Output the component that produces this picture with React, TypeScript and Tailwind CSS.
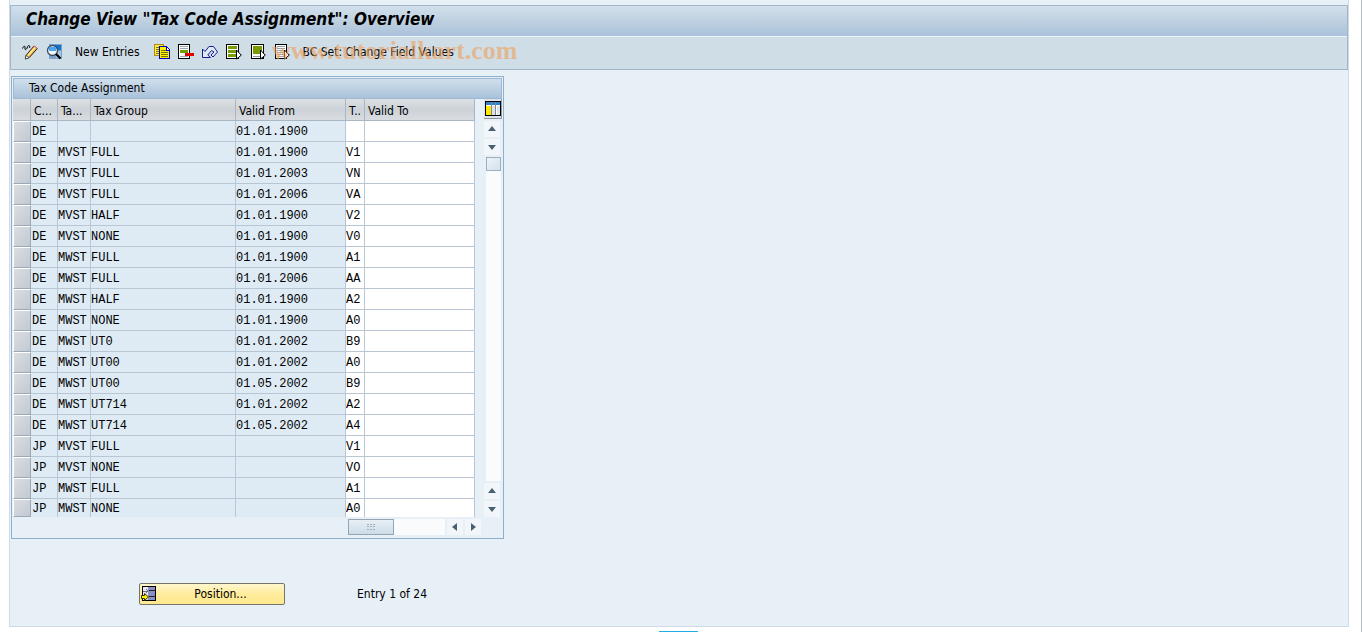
import type { ReactNode } from 'react';

type Entry = {
  country: string;
  category: string;
  group: string;
  from: string;
  code: string;
};

const entries: Entry[] = [
  { country: 'DE', category: '', group: '', from: '01.01.1900', code: '' },
  { country: 'DE', category: 'MVST', group: 'FULL', from: '01.01.1900', code: 'V1' },
  { country: 'DE', category: 'MVST', group: 'FULL', from: '01.01.2003', code: 'VN' },
  { country: 'DE', category: 'MVST', group: 'FULL', from: '01.01.2006', code: 'VA' },
  { country: 'DE', category: 'MVST', group: 'HALF', from: '01.01.1900', code: 'V2' },
  { country: 'DE', category: 'MVST', group: 'NONE', from: '01.01.1900', code: 'V0' },
  { country: 'DE', category: 'MWST', group: 'FULL', from: '01.01.1900', code: 'A1' },
  { country: 'DE', category: 'MWST', group: 'FULL', from: '01.01.2006', code: 'AA' },
  { country: 'DE', category: 'MWST', group: 'HALF', from: '01.01.1900', code: 'A2' },
  { country: 'DE', category: 'MWST', group: 'NONE', from: '01.01.1900', code: 'A0' },
  { country: 'DE', category: 'MWST', group: 'UT0', from: '01.01.2002', code: 'B9' },
  { country: 'DE', category: 'MWST', group: 'UT00', from: '01.01.2002', code: 'A0' },
  { country: 'DE', category: 'MWST', group: 'UT00', from: '01.05.2002', code: 'B9' },
  { country: 'DE', category: 'MWST', group: 'UT714', from: '01.01.2002', code: 'A2' },
  { country: 'DE', category: 'MWST', group: 'UT714', from: '01.05.2002', code: 'A4' },
  { country: 'JP', category: 'MVST', group: 'FULL', from: '', code: 'V1' },
  { country: 'JP', category: 'MVST', group: 'NONE', from: '', code: 'VO' },
  { country: 'JP', category: 'MWST', group: 'FULL', from: '', code: 'A1' },
  { country: 'JP', category: 'MWST', group: 'NONE', from: '', code: 'A0' },
];

function Icon({ children }: { children: ReactNode }) {
  return (
    <svg viewBox="0 0 16 16" className="block size-4" shapeRendering="crispEdges" aria-hidden="true">
      {children}
    </svg>
  );
}

function ToolButton({ label, children }: { label: string; children: ReactNode }) {
  return (
    <button type="button" aria-label={label} className="block size-4 shrink-0">
      <Icon>{children}</Icon>
    </button>
  );
}

function Cursor() {
  return <path d="M10.500 6v9l4.800-3.800z" fill="#fff" stroke="#000" shapeRendering="auto" />;
}

const arrowPaths = {
  up: 'M4 10l4-5 4 5z',
  down: 'M4 6l4 5 4-5z',
  left: 'M10 4l-5 4 5 4z',
  right: 'M6 4l5 4-5 4z',
};

function ArrowButton({ dir }: { dir: keyof typeof arrowPaths }) {
  return (
    <button type="button" aria-label={`Scroll ${dir}`} className="flex size-4 shrink-0 items-center justify-center bg-[#f2f6fa]">
      <svg viewBox="0 0 16 16" className="size-4" aria-hidden="true">
        <path d={arrowPaths[dir]} fill="#4a6072" />
      </svg>
    </button>
  );
}

function HeaderCell({ children }: { children?: ReactNode }) {
  return (
    <th className="overflow-hidden border-r border-b border-[#a9b6c3] bg-linear-to-b from-[#dde1e5] via-[#cdd2d8] to-[#d9dde2] p-0 pt-[2px] pl-[3px] text-left font-normal whitespace-nowrap">
      {children}
    </th>
  );
}

const cell = 'overflow-hidden border-r border-b border-[#b9c7d5] p-0 pt-[2px] whitespace-nowrap group-last:border-b-0';

export default function App() {
  return (
    <div className="relative min-h-screen overflow-hidden border-r border-[#b6bfc9] bg-white pr-3 pb-1 pl-[9px] font-['DejaVu_Sans_Condensed','Noto_Sans',sans-serif] text-[12px] leading-4 text-black">
      <main className="flex min-h-[627px] flex-col border-x border-b border-[#d0d9e5] bg-[#e7eff7] pt-[5px]">
        <header className="relative border border-[#a3b6c8] bg-[#cfdde7]">
          <h1 className="h-[31px] border-b border-[#edf3f8] bg-linear-to-b from-[#d2e0ec] via-[#bed1e0] to-[#a9c1da] pl-[15px] text-[17px] leading-[27px] font-bold italic">
            Change View "Tax Code Assignment": Overview
          </h1>
          <div className="flex h-8 items-center gap-2 pb-[2px] pl-[11px]">
            <ToolButton label="Display / Change">
              <path d="M.5 4.500c1-3 3-3 2.500-.5s1.500 2 2.500-1 3-1 2 1" fill="none" stroke="#000" shapeRendering="auto" />
              <path d="M4 11.500l8-9.500 3.300 2.500-8 9-4 1.500z" fill="#ffae35" stroke="#222" shapeRendering="auto" />
              <path d="M6 11.500l7-8" stroke="#fff3a0" strokeWidth="1.500" shapeRendering="auto" />
              <path d="M11.500 2.500l3 2.500 1-1-3-2.500z" fill="#e08a8a" shapeRendering="auto" />
              <path d="M4 11.500l3 2-3.500 1.500z" fill="#fff" stroke="#222" strokeWidth=".5" shapeRendering="auto" />
            </ToolButton>
            <ToolButton label="Details">
              <path d="M3 0h13v15H3z" fill="#7ba3c8" />
              <path d="M4 1h11v5H4z" fill="#0f73d2" />
              <path d="M10 7h5v7h-5z" fill="#a9c6de" />
              <circle cx="6.500" cy="6.500" r="5" fill="#f2faff" stroke="#3a4c60" strokeWidth="1.300" shapeRendering="auto" />
              <path d="M3 3h7v4H3z" fill="#49a5f2" />
              <path d="M10 10l4.500 4.500" stroke="#000" strokeWidth="2.200" shapeRendering="auto" />
            </ToolButton>
            <button type="button" className="mr-[6px] ml-[5px]">New Entries</button>
            <ToolButton label="Copy As">
              <path d="M.5.5h9v11h-9z" fill="#ffee30" stroke="#b08a20" />
              <path d="M5.500 2.500h7l3 3v9h-10z" fill="#fff000" stroke="#0000d0" />
              <path d="M7 6h5M7 8h7M7 10h7M7 12h7M2 3h3M2 5h3M2 7h3M2 9h3" stroke="#777700" />
              <path d="M12 3v3h3" fill="#fff" stroke="#0000d0" />
            </ToolButton>
            <ToolButton label="Delete">
              <path d="M.5.5h11v14H.5z" fill="#fff" stroke="#000" />
              <path d="M2 2h8v1H2zM2 4h8v1H2zM2 12h8v1H2z" fill="#9aa8b4" />
              <path d="M2 6h8v3H2z" fill="#789c00" />
              <path d="M7 9h9v3H7z" fill="#e80000" />
            </ToolButton>
            <ToolButton label="Undo Change">
              <path d="M.5 5v8.500h8L5.800 11l3.700-4.500 2.500 1.500-3 3 2 2 4.500-5-4-5.500H7L3 7.500z" fill="#dfe9f6" stroke="#1a1a90" shapeRendering="auto" />
            </ToolButton>
            <ToolButton label="Select All">
              <path d="M.5.5h12v14H.5z" fill="#fff" stroke="#000" />
              <path d="M2 2h9v3H2zM2 6h9v3H2zM2 10h9v3H2z" fill="#789c00" />
              <Cursor />
            </ToolButton>
            <ToolButton label="Select Block">
              <path d="M1.500.5h12v14h-12z" fill="#fff" stroke="#000" />
              <path d="M3 2h9v8H3z" fill="#789c00" />
              <path d="M3 12h7v1H3z" fill="#8799a8" />
              <Cursor />
            </ToolButton>
            <ToolButton label="Deselect All">
              <path d="M1.500.5h11v14h-11z" fill="#fff" stroke="#000" />
              <path d="M3 2h8v1H3zM3 4h8v1H3zM3 6h8v1H3zM3 8h8v1H3zM3 10h7v1H3zM3 12h7v1H3z" fill="#8ca0b0" />
              <Cursor />
            </ToolButton>
            <button type="button" className="ml-[5px]">BC Set: Change Field Values</button>
          </div>
          <span className="pointer-events-none absolute top-[31px] left-[261px] font-['Liberation_Serif',serif] text-[26px] leading-7 font-bold text-[#f0a05a]/60">
            www.tutorialkart.com
          </span>
        </header>

        <section className="mt-[6px] ml-px w-[493px] border border-[#8fb0cc] p-px">
          <h2 className="h-[21px] border border-[#9db9d2] bg-linear-to-b from-[#d0dfeb] to-[#a9c2da] pl-[15px] leading-[19px]">
            Tax Code Assignment
          </h2>
          <div className="flex justify-between">
            <table className="w-[462px] table-fixed border-separate border-spacing-0">
              <colgroup>
                <col className="w-[18px]" />
                <col className="w-[27px]" />
                <col className="w-[33px]" />
                <col className="w-[145px]" />
                <col className="w-[110px]" />
                <col className="w-[19px]" />
                <col className="w-[110px]" />
              </colgroup>
              <thead>
                <tr className="h-[22px]">
                  <HeaderCell />
                  <HeaderCell>C...</HeaderCell>
                  <HeaderCell>Ta...</HeaderCell>
                  <HeaderCell>Tax Group</HeaderCell>
                  <HeaderCell>Valid From</HeaderCell>
                  <HeaderCell>T..</HeaderCell>
                  <HeaderCell>Valid To</HeaderCell>
                </tr>
              </thead>
              <tbody className="bg-[#deebf5] font-['Liberation_Mono',monospace] text-[12px]">
                {entries.map((entry, i) => (
                  <tr key={i} className="group h-[21px] last:h-[18px]">
                    <td className="border border-[#9ba8b6] border-t-white border-l-white bg-linear-to-br from-[#dadee3] to-[#c3c9d1] p-0" />
                    <td className={`${cell} pl-px`}>{entry.country}</td>
                    <td className={cell}>{entry.category}</td>
                    <td className={cell}>{entry.group}</td>
                    <td className={cell}>{entry.from}</td>
                    <td className={`${cell} bg-white`}>{entry.code}</td>
                    <td className={`${cell} bg-white`} />
                  </tr>
                ))}
              </tbody>
            </table>
            <div className="flex w-[18px] flex-col items-start gap-[2px]">
              <button type="button" aria-label="Table settings" className="flex h-5 w-[18px] items-center justify-center border-r border-b border-[#8b98a5] bg-[#dde3e9]">
                <svg viewBox="0 0 16 16" className="block size-4" shapeRendering="crispEdges" aria-hidden="true">
                  <path d="M.5.5h15v14H.5z" fill="#fff" stroke="#000" />
                  <path d="M1 1h14v3H1z" fill="#2d84c8" />
                  <path d="M1 5h5v9H1z" fill="#ffe800" />
                  <path d="M7 5h3v9H7zM12 5h3v9h-3z" fill="#dfe4e8" />
                  <path d="M6 1h1v13H6zM10 1h1v13h-1z" fill="#7c8b99" />
                </svg>
              </button>
              <ArrowButton dir="up" />
              <ArrowButton dir="down" />
              <div className="flex w-[15px] grow flex-col self-center bg-[#fafbfc]">
                <div className="h-[14px] border border-[#9caebf] bg-linear-to-br from-[#eef3f8] to-[#d4e1ec]" />
              </div>
              <ArrowButton dir="up" />
              <ArrowButton dir="down" />
            </div>
          </div>
          <div className="flex h-5 items-center gap-[2px] pr-[21px] pl-[335px]">
            <div className="flex h-[16px] grow bg-[#fafbfc]">
              <div className="flex w-[46px] items-center justify-center border border-[#95a5b4] bg-linear-to-b from-[#e8f0f6] to-[#cddce8]">
                <svg viewBox="0 0 8 6" className="h-[6px] w-2" shapeRendering="crispEdges" aria-hidden="true">
                  <path d="M0 0h2v1H0zM3 0h2v1H3zM6 0h2v1H6zM0 2h2v1H0zM3 2h2v1H3zM6 2h2v1H6zM0 5h2v1H0zM3 5h2v1H3zM6 5h2v1H6z" fill="#9dafbf" />
                </svg>
              </div>
            </div>
            <ArrowButton dir="left" />
            <ArrowButton dir="right" />
          </div>
        </section>

        <div className="mt-11 flex items-center gap-[72px] pl-[129px]">
          <button type="button" className="flex h-[22px] w-[146px] items-center rounded-xs border border-[#74766c] bg-linear-to-b from-[#fff7cd] via-[#ffec9c] to-[#ffe88e] pl-px">
            <Icon>
              <path d="M1.500.5h13v14h-13z" fill="#e4e9f4" stroke="#000" />
              <path d="M7 1h7v13H7z" fill="#8b90c4" />
              <path d="M2 5h4M5 3l2 2-2 2" fill="none" stroke="#6a7080" />
              <path d="M8 4h6v1H8zM8 10h6v1H8z" fill="#222" />
              <path d="M.5 9.500h3v-2l4 3.500-4 3.500v-2h-3z" fill="#ffee00" stroke="#333300" shapeRendering="auto" />
            </Icon>
            <span className="grow text-center">Position...</span>
          </button>
          <span>Entry 1 of 24</span>
        </div>
      </main>
      <div className="absolute bottom-0 left-[659px] h-px w-[39px] bg-[#21aee6]" />
    </div>
  );
}
